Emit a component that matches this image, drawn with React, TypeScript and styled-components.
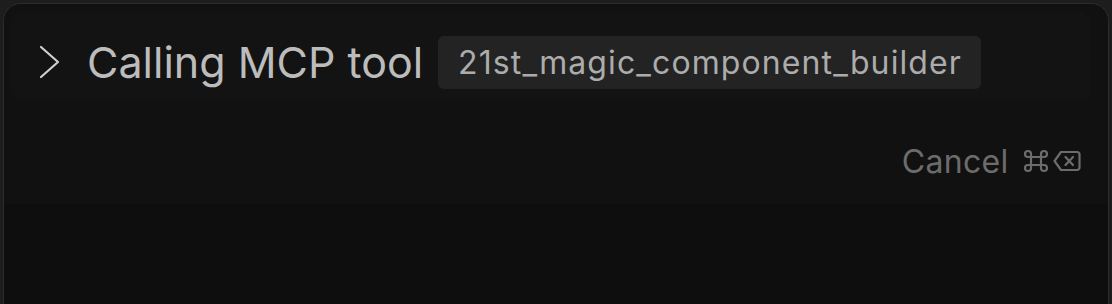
import styled, { createGlobalStyle } from "styled-components";

const GlobalStyle = createGlobalStyle`
  html, body {
    margin: 0;
    padding: 0;
    background: #1d1d1d;
  }
  body {
    font-family: Inter, "Liberation Sans", sans-serif;
  }
`;

const Frame = styled.div`
  height: 304px;
  padding: 3px 3px 0;
  box-sizing: border-box;
`;

const Panel = styled.div`
  height: 100%;
  box-sizing: border-box;
  border: 1.5px solid #2c2c2c;
  border-bottom: none;
  border-radius: 18px 18px 0 0;
  background: #101010;
  display: flex;
  flex-direction: column;
  overflow: hidden;
`;

const Body = styled.div`
  padding: 7.5px 17.5px 0 6px;
  display: flex;
  flex-direction: column;
  background: #111111;
`;

const HeaderCard = styled.div`
  height: 88px;
  box-sizing: border-box;
  padding: 24px 0 11px 28px;
  border-radius: 12px;
  background: #131313;
  display: flex;
  align-items: center;
  gap: 15px;
`;

const Chevron = styled.svg`
  width: 24px;
  height: 34px;
  flex: none;
  margin-right: 10px;
`;

const Title = styled.span`
  font-size: 43px;
  color: #bcbcbc;
  line-height: 1;
`;

const Chip = styled.span`
  height: 53px;
  box-sizing: border-box;
  padding: 0 19px 0 20px;
  border-radius: 6px;
  background: #232323;
  color: #acacac;
  font-size: 32px;
  letter-spacing: 1.1px;
  display: inline-flex;
  align-items: center;
`;

const Actions = styled.div`
  height: 104px;
  display: flex;
  justify-content: flex-end;
  align-items: flex-start;
  padding: 42px 10px 0 0;
  box-sizing: border-box;
`;

const CancelButton = styled.button`
  all: unset;
  cursor: pointer;
  display: inline-flex;
  align-items: center;
  gap: 13px;
  color: #6c6c6c;
  font-family: inherit;
  font-size: 32px;
  letter-spacing: 0.3px;
`;

const Keys = styled.span`
  display: inline-flex;
  align-items: center;
  gap: 3px;
`;

const KeyIcon = styled.svg`
  width: 28px;
  height: 24px;
`;

const Footer = styled.div`
  flex: 1;
  background: #0e0e0e;
`;

export default function App() {
  return (
    <>
      <GlobalStyle />
      <Frame>
        <Panel>
          <Body>
            <HeaderCard>
              <Chevron viewBox="0 0 24 34" fill="none">
                <path
                  d="M3 2 L20 17 L3 32"
                  stroke="#cfcfcf"
                  strokeWidth="2.2"
                  strokeLinecap="round"
                  strokeLinejoin="round"
                />
              </Chevron>
              <Title>Calling MCP tool</Title>
              <Chip>21st_magic_component_builder</Chip>
            </HeaderCard>
            <Actions>
              <CancelButton>
                Cancel
                <Keys>
                  <KeyIcon viewBox="0 0 28 24" fill="none">
                    <g stroke="#6c6c6c" strokeWidth="2.2" fill="none">
                      <path d="M9 8 V16 M19 8 V16 M9 8 H19 M9 16 H19" />
                      <path d="M9 8 H6 A3 3 0 1 1 9 5 V8" />
                      <path d="M19 8 H22 A3 3 0 1 0 19 5 V8" />
                      <path d="M9 16 H6 A3 3 0 1 0 9 19 V16" />
                      <path d="M19 16 H22 A3 3 0 1 1 19 19 V16" />
                    </g>
                  </KeyIcon>
                  <KeyIcon viewBox="0 0 28 24" fill="none">
                    <path
                      d="M8 3 H24 A2.5 2.5 0 0 1 26.5 5.5 V18.5 A2.5 2.5 0 0 1 24 21 H8 L1.5 12 Z"
                      stroke="#6c6c6c"
                      strokeWidth="2.2"
                      strokeLinejoin="round"
                    />
                    <path
                      d="M12.5 8 L20 16 M20 8 L12.5 16"
                      stroke="#6c6c6c"
                      strokeWidth="2.2"
                      strokeLinecap="round"
                    />
                  </KeyIcon>
                </Keys>
              </CancelButton>
            </Actions>
          </Body>
          <Footer />
        </Panel>
      </Frame>
    </>
  );
}
